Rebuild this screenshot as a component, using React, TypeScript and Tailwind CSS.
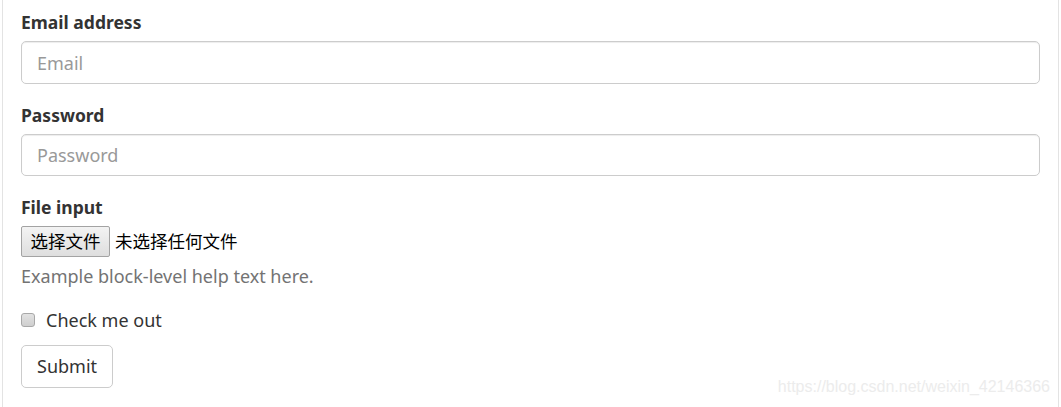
import React from 'react';

const font = "font-['Noto_Sans','Noto_Sans_CJK_SC',sans-serif]";

const inputCls =
  'block h-[42.5px] w-full rounded-[5px] border border-[#ccc] px-[15px] text-[18px] shadow-[inset_0_1px_1px_rgba(0,0,0,0.075)] outline-none placeholder:text-[#999]';

const App: React.FC = () => {
  return (
    <div className={`relative min-h-screen bg-white text-[#333] ${font}`}>
      <div className="ml-[2px] w-[1057px] min-h-[407px] border-x border-[#e3e3e3] px-[18px] pt-[10px]">
        <form className="text-[18px] leading-[25px]" onSubmit={e => e.preventDefault()}>
          <div className="mb-[18.75px]">
            <label className="mb-[6.25px] block text-[17.5px] font-bold">Email address</label>
            <input type="email" placeholder="Email" className={inputCls} />
          </div>
          <div className="mb-[18.75px]">
            <label className="mb-[6.25px] block text-[17.5px] font-bold">Password</label>
            <input type="password" placeholder="Password" className={inputCls} />
          </div>
          <div className="mb-[18.75px]">
            <label className="mb-[6.25px] block text-[17.5px] font-bold">File input</label>
            <div className="flex h-[31.25px] items-center gap-[5px] text-[17.5px] text-black">
              <span className="flex h-[31px] w-[89px] items-center justify-center rounded-[2px] border border-[#a3a3a3] bg-gradient-to-b from-[#f3f3f3] to-[#dedede]">
                选择文件
              </span>
              <span>未选择任何文件</span>
            </div>
            <p className="mt-[6.25px] text-[#737373]">Example block-level help text here.</p>
          </div>
          <div className="mb-[12.5px] flex items-center">
            <span className="mr-[11px] h-[14px] w-[14px] rounded-[3px] border border-[#a8a8a8] bg-gradient-to-b from-[#e2e2e2] to-[#cfcfcf]" />
            <span>Check me out</span>
          </div>
          <button
            type="submit"
            className="h-[42.5px] rounded-[5px] border border-[#ccc] bg-white px-[15px] text-[#333]"
          >
            Submit
          </button>
        </form>
      </div>
      <span className="pointer-events-none absolute bottom-[12px] right-[11px] font-['Liberation_Sans',sans-serif] text-[16px] leading-none text-[#ececec]">
        https://blog.csdn.net/weixin_42146366
      </span>
    </div>
  );
};

export default App;
